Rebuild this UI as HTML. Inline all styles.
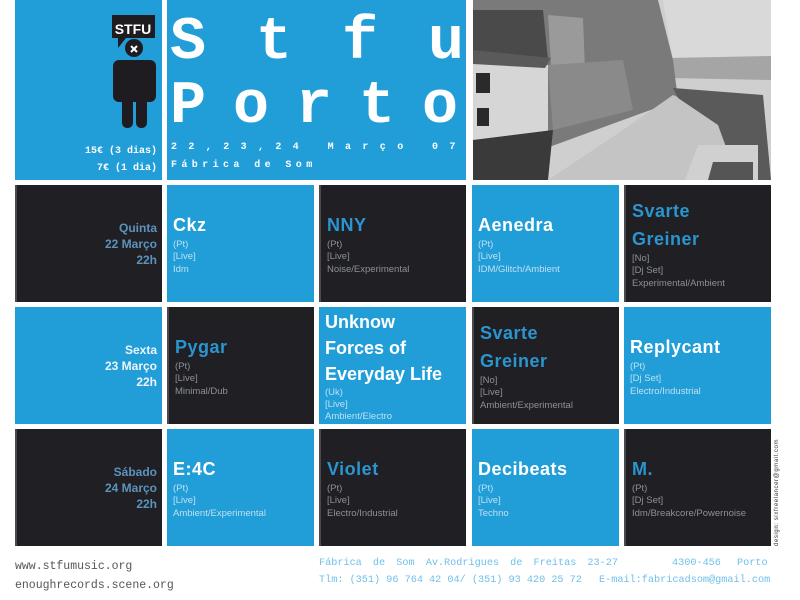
<!DOCTYPE html>
<html><head><meta charset="utf-8"><style>
*{margin:0;padding:0;box-sizing:border-box}
body{width:800px;height:600px;background:#fff;position:relative;overflow:hidden;font-family:"Liberation Sans",sans-serif}
.c{position:absolute;width:147px;height:117px;display:flex;flex-direction:column;justify-content:center;padding-left:6px}
.b{background:#219dd8}
.d{background:#201f24;border-left:2px solid #4a4a4e}
.n{font-size:18px;line-height:28px;font-weight:bold;letter-spacing:0.5px}
.b .n{color:#fff}
.d .n{color:#2a95cf}
.t{font-size:9.5px;line-height:12.5px}
.b .t{color:#bfe0f3}
.d .t{color:#8b9199}
.day{align-items:flex-end;padding-left:0;padding-right:5px;text-align:right;font-size:12px;font-weight:bold;line-height:16px}
.d.day{color:#5b93bd}
.b.day{color:#eef6fb}
.mono{font-family:"Liberation Mono",monospace}
.f{position:absolute;font-family:"Liberation Mono",monospace;font-size:10.2px;color:#6fc0ea;white-space:nowrap}
</style></head><body>
<div style="position:absolute;left:15px;top:0;width:147px;height:180px;background:#219dd8"></div>
<svg style="position:absolute;left:100px;top:10px" width="70" height="125">
<path d="M12 5 h43 v23 h-29 l-8 10 v-10 h-6z" fill="#1e1c20"/>
<text x="33" y="24" font-family="Liberation Sans" font-weight="bold" font-size="14" fill="#fff" text-anchor="middle">STFU</text>
<circle cx="34" cy="38" r="9" fill="#1e1c20"/>
<path d="M31 36 l6 6 M37 36 l-6 6" stroke="#fff" stroke-width="2"/>
<rect x="13" y="50" width="43" height="42" rx="6" fill="#1e1c20"/>
<rect x="22" y="75" width="11" height="43" rx="5" fill="#1e1c20"/>
<rect x="36" y="75" width="11" height="43" rx="5" fill="#1e1c20"/>
</svg>
<div class="mono" style="position:absolute;right:643px;top:143px;color:#fff;font-size:10px;line-height:17px;text-align:right;font-weight:bold">15€ (3 dias)<br>7€ (1 dia)</div>
<div style="position:absolute;left:167px;top:0;width:299px;height:180px;background:#219dd8"></div>
<div class="mono" style="position:absolute;left:170px;top:8px;color:#fff;font-size:60px;font-weight:bold;letter-spacing:50px;line-height:70px;white-space:nowrap">Stfu</div>
<div class="mono" style="position:absolute;left:170px;top:72px;color:#fff;font-size:60px;font-weight:bold;letter-spacing:27px;line-height:70px;white-space:nowrap">Porto</div>
<div class="mono" style="position:absolute;left:171px;top:142px;color:#fff;font-size:10px;letter-spacing:11.4px;white-space:nowrap;font-weight:bold">22,23,24 Março 07</div>
<div class="mono" style="position:absolute;left:171px;top:160px;color:#fff;font-size:10px;letter-spacing:4.4px;white-space:nowrap;font-weight:bold">Fábrica de Som</div>
<svg style="position:absolute;left:473px;top:0" width="298" height="180">
<rect width="298" height="180" fill="#cfcfcf"/>
<path d="M190 0 H298 V60 L200 62z" fill="#d9d9d9"/>
<path d="M195 58 L298 56 L298 80 L195 78z" fill="#a5a5a5"/>
<path d="M0 0 H185 L200 60 L205 100 L150 120 L0 175z" fill="#7a7a7a"/>
<path d="M0 10 H70 L75 60 L0 58z" fill="#4a4a4a"/>
<path d="M75 15 L110 18 L112 70 L78 65z" fill="#9a9a9a"/>
<path d="M0 60 L75 65 L75 140 L0 140z" fill="#d6d6d6"/>
<path d="M0 50 L78 58 L72 68 L0 64z" fill="#5a5a5a"/>
<rect x="3" y="73" width="14" height="20" fill="#2a2a2a"/><rect x="4" y="108" width="12" height="18" fill="#2a2a2a"/>
<path d="M75 65 L150 60 L160 110 L80 130z" fill="#8a8a8a"/>
<path d="M0 140 L80 130 L75 180 L0 180z" fill="#3a3a3a"/>
<path d="M75 180 L150 130 L200 95 L245 115 L265 180z" fill="#c4c4c4"/>
<path d="M200 88 L290 95 L298 180 L265 180 L245 125 L205 98z" fill="#5a5a5a"/>
<path d="M225 145 L285 145 L285 180 L212 180z" fill="#d0d0d0"/>
<path d="M240 162 L280 162 L280 180 L235 180z" fill="#555"/>
</svg>

<div class="c d day" style="left:15px;top:185px">Quinta<br>22 Março<br>22h</div>
<div class="c b" style="left:167px;top:185px"><div class="n">Ckz</div><div class="t">(Pt)<br>[Live]<br>Idm</div></div>
<div class="c d" style="left:319px;top:185px"><div class="n">NNY</div><div class="t">(Pt)<br>[Live]<br>Noise/Experimental</div></div>
<div class="c b" style="left:472px;top:185px"><div class="n">Aenedra</div><div class="t">(Pt)<br>[Live]<br>IDM/Glitch/Ambient</div></div>
<div class="c d" style="left:624px;top:185px"><div class="n">Svarte<br>Greiner</div><div class="t">[No]<br>[Dj Set]<br>Experimental/Ambient</div></div>

<div class="c b day" style="left:15px;top:307px">Sexta<br>23 Março<br>22h</div>
<div class="c d" style="left:167px;top:307px"><div class="n">Pygar</div><div class="t">(Pt)<br>[Live]<br>Minimal/Dub</div></div>
<div class="c b" style="left:319px;top:307px"><div class="n" style="white-space:nowrap;letter-spacing:0;line-height:26px;font-size:18px">Unknow<br>Forces of<br>Everyday Life</div><div class="t" style="line-height:12px">(Uk)<br>[Live]<br>Ambient/Electro</div></div>
<div class="c d" style="left:472px;top:307px"><div class="n">Svarte<br>Greiner</div><div class="t">[No]<br>[Live]<br>Ambient/Experimental</div></div>
<div class="c b" style="left:624px;top:307px"><div class="n">Replycant</div><div class="t">(Pt)<br>[Dj Set]<br>Electro/Industrial</div></div>

<div class="c d day" style="left:15px;top:429px">Sábado<br>24 Março<br>22h</div>
<div class="c b" style="left:167px;top:429px"><div class="n">E:4C</div><div class="t">(Pt)<br>[Live]<br>Ambient/Experimental</div></div>
<div class="c d" style="left:319px;top:429px"><div class="n">Violet</div><div class="t">(Pt)<br>[Live]<br>Electro/Industrial</div></div>
<div class="c b" style="left:472px;top:429px"><div class="n">Decibeats</div><div class="t">(Pt)<br>[Live]<br>Techno</div></div>
<div class="c d" style="left:624px;top:429px"><div class="n">M.</div><div class="t">(Pt)<br>[Dj Set]<br>Idm/Breakcore/Powernoise</div></div>

<div style="position:absolute;left:774px;top:546px;transform:rotate(-90deg);transform-origin:0 0;font-size:6px;color:#333;white-space:nowrap;letter-spacing:0.6px">design: sixfreelancer@gmail.com</div>
<div class="mono" style="position:absolute;left:15px;top:557px;font-size:11.5px;line-height:19px;color:#555">www.stfumusic.org<br>enoughrecords.scene.org</div>
<div class="f" style="left:319px;top:558px;word-spacing:5px">Fábrica de Som Av.Rodrigues de Freitas 23-27</div>
<div class="f" style="left:672px;top:558px">4300-456</div>
<div class="f" style="left:737px;top:558px">Porto</div>
<div class="f" style="left:319px;top:575px">Tlm: (351) 96 764 42 04/ (351) 93 420 25 72</div>
<div class="f" style="left:599px;top:575px">E-mail:fabricadsom@gmail.com</div>
</body></html>
